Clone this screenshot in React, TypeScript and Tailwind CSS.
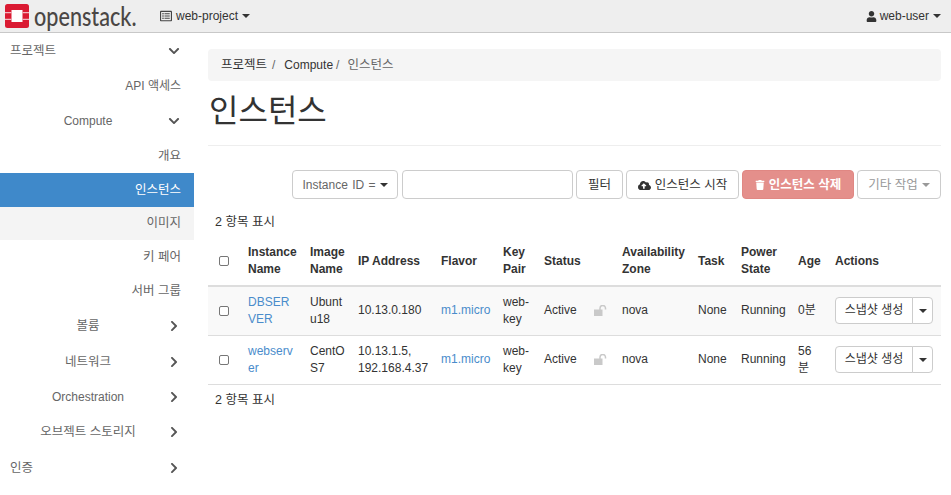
import React from "react";
import {
  FaChevronDown,
  FaChevronRight,
  FaCloudUploadAlt,
  FaRegListAlt,
  FaTrash,
  FaUser,
} from "react-icons/fa";

const Caret = ({ className = "" }: { className?: string }) => (
  <span
    className={`inline-block w-0 h-0 border-x-[4px] border-x-transparent border-t-[4px] border-t-current ${className}`}
  />
);

const Logo = () => (
  <svg width="24" height="24" viewBox="0 0 24 24" className="shrink-0">
    <rect width="24" height="24" rx="2.500" fill="#da1a32" />
    <rect x="6.500" y="6" width="11" height="12" fill="#fff" />
    <path fill="#f3b6bf" d="M0 8h6.500v1.200H0zM0 14.800h6.500V16H0zM17.500 8H24v1.200h-6.500zM17.500 14.800H24V16h-6.500z" />
  </svg>
);

// open padlock, the shackle swings out to the right of the body
const OpenLock = () => (
  <svg width="13" height="11" viewBox="0 0 13 11" className="ml-[6px]">
    <rect x="0" y="4.500" width="8.500" height="6.500" fill="#c9c9c9" />
    <path
      d="M6 5V3.200a2.500 2.500 0 0 1 5.500 0V4.500"
      fill="none"
      stroke="#c9c9c9"
      strokeWidth="1.500"
    />
  </svg>
);

type NavItem = {
  label: string;
  level: "top" | "group" | "leaf";
  h: string;
  open?: boolean;
  active?: boolean;
  hover?: boolean;
};

const navItems: NavItem[] = [
  { label: "프로젝트", level: "top", open: true, h: "h-[36px]" },
  { label: "API 액세스", level: "leaf", h: "h-[34px]" },
  { label: "Compute", level: "group", open: true, h: "h-[36px]" },
  { label: "개요", level: "leaf", h: "h-[34px]" },
  { label: "인스턴스", level: "leaf", active: true, h: "h-[34px]" },
  { label: "이미지", level: "leaf", hover: true, h: "h-[33px]" },
  { label: "키 페어", level: "leaf", h: "h-[34px]" },
  { label: "서버 그룹", level: "leaf", h: "h-[34px]" },
  { label: "볼륨", level: "group", h: "h-[36px]" },
  { label: "네트워크", level: "group", h: "h-[36px]" },
  { label: "Orchestration", level: "group", h: "h-[34px]" },
  { label: "오브젝트 스토리지", level: "group", h: "h-[36px]" },
  { label: "인증", level: "top", h: "h-[36px]" },
];

const labelSize = (label: string) =>
  /^[가-힣 ]+$/.test(label) ? "text-[12.5px]" : "text-[12px]";

const Sidebar = () => (
  <nav className="w-[194px] shrink-0">
    {navItems.map((item) => (
      <div
        key={item.label}
        className={`flex ${item.h} items-center pl-[10px] pr-[13px] ${
          item.active
            ? "bg-[#3f89ca] text-white"
            : item.hover
            ? "bg-[#f4f4f4] text-[#666]"
            : "text-[#666]"
        }`}
      >
        {item.level === "leaf" ? (
          <span className={`w-full text-right ${labelSize(item.label)}`}>
            {item.label}
          </span>
        ) : (
          <>
            <span
              className={`flex-1 pr-[1px] ${labelSize(item.label)} ${
                item.level === "top" ? "text-left" : "text-center"
              }`}
            >
              {item.label}
            </span>
            <span className="w-[13px] mr-[1px] flex justify-center text-[#555]">
              {item.open ? (
                <FaChevronDown size={12} />
              ) : (
                <FaChevronRight size={12} />
              )}
            </span>
          </>
        )}
      </div>
    ))}
  </nav>
);

const Btn = ({
  children,
  className = "",
}: {
  children: React.ReactNode;
  className?: string;
}) => (
  <button
    className={`h-[29px] pt-[1px] flex items-center justify-center gap-1 rounded-[4px] border border-[#ccc] bg-white text-[#333] ${className}`}
  >
    {children}
  </button>
);

const Checkbox = () => (
  <span className="block w-[10px] h-[10px] mx-auto rounded-[2px] border border-[#767676] bg-white" />
);

const rows = [
  {
    name: "DBSERVER",
    image: "Ubuntu18",
    ip: ["10.13.0.180"],
    age: "0분",
    bg: "bg-[#f9f9f9]",
  },
  {
    name: "webserver",
    image: "CentOS7",
    ip: ["10.13.1.5,", "192.168.4.37"],
    age: "56분",
    bg: "",
  },
];

const headers = [
  "Instance Name",
  "Image Name",
  "IP Address",
  "Flavor",
  "Key Pair",
  "Status",
  "",
  "Availability Zone",
  "Task",
  "Power State",
  "Age",
  "Actions",
];

const widths = [32, 62, 48, 83, 62, 41, 44, 34, 76, 43, 57, 37, 114];

export default function App() {
  return (
    <div className="w-[951px] h-[495px] overflow-hidden bg-white text-[12px] leading-[17px] text-[#333] font-['Liberation_Sans','Noto_Sans_CJK_KR',sans-serif]">
      <header className="h-[33px] flex items-center bg-[#eeeeee] border-b border-[#c8c8c8] pr-[10px]">
        <div className="flex items-center pl-[5px]">
          <Logo />
          <span className="ml-[5px] w-[104px] text-[27px] leading-[32px] font-medium whitespace-nowrap origin-left scale-x-[0.8] text-[#4a4644] font-['Lato',sans-serif]">
            openstack.
          </span>
        </div>
        <div className="ml-[22px] flex items-center gap-[4px]">
          <FaRegListAlt size={12} className="text-[#444]" />
          <span>web-project</span>
          <Caret />
        </div>
        <div className="ml-auto flex items-center gap-[4px]">
          <FaUser size={11} className="text-[#333] -mr-[1px]" />
          <span>web-user</span>
          <Caret />
        </div>
      </header>

      <div className="flex">
        <Sidebar />
        <main className="ml-[14px] w-[733px] pt-[16px]">
          <div className="h-[32px] flex items-center rounded-[4px] bg-[#f5f5f5] px-[13px]">
            <span className="text-[12.5px]">프로젝트</span>
            <span className="ml-[5px] mr-[9px] text-[#666]">/</span>
            <span>Compute</span>
            <span className="ml-[3px] mr-[8px] text-[#666]">/</span>
            <span className="text-[12.5px] text-[#666]">인스턴스</span>
          </div>
          <h1 className="mt-[11px] h-[53px] text-[32px] leading-[38px] pl-[1px] font-normal">
            인스턴스
          </h1>
          <div className="border-b border-[#eeeeee]" />
          <div className="mt-[24px] flex items-center justify-end gap-[3px]">
            <Btn className="w-[106px] !text-[#666] [word-spacing:1px]">
              Instance ID = <Caret className="text-[#333]" />
            </Btn>
            <div className="ml-[1px] w-[171px] h-[29px] rounded-[4px] border border-[#ccc] bg-white" />
            <Btn className="w-[47px] text-[12.5px]">필터</Btn>
            <Btn className="w-[113px] text-[12.5px]">
              <FaCloudUploadAlt size={13} />
              인스턴스 시작
            </Btn>
            <Btn className="w-[112px] !bg-[#e48f8b] !border-[#e08783] !text-white font-bold text-[12.5px]">
              <FaTrash size={10} />
              인스턴스 삭제
            </Btn>
            <Btn className="w-[84px] !text-[#999] text-[12.5px]">
              기타 작업 <Caret />
            </Btn>
          </div>

          <div className="mt-[15px] pl-[7px] h-[17px] text-[12.5px]">
            2 항목 표시
          </div>

          <table className="mt-[6px] w-[733px] table-fixed border-collapse">
            <colgroup>
              {widths.map((w, i) => (
                <col key={i} style={{ width: w }} />
              ))}
            </colgroup>
            <thead>
              <tr className="h-[49px] border-b-2 border-[#dddddd]">
                <th className="px-[8px]">
                  <Checkbox />
                </th>
                {headers.map((h, i) => (
                  <th key={i} className="px-[8px] text-left font-bold">
                    {h}
                  </th>
                ))}
              </tr>
            </thead>
            <tbody>
              {rows.map((r) => (
                <tr
                  key={r.name}
                  className={`h-[49px] border-b border-[#dddddd] ${r.bg}`}
                >
                  <td className="px-[8px]">
                    <Checkbox />
                  </td>
                  <td className="px-[8px] break-all text-[#4a8ccb]">{r.name}</td>
                  <td className="pl-[8px] pr-[4px] break-all">{r.image}</td>
                  <td className="px-[8px]">
                    {r.ip.map((ip) => (
                      <div key={ip}>{ip}</div>
                    ))}
                  </td>
                  <td className="px-[8px] text-[#4a8ccb]">m1.micro</td>
                  <td className="px-[8px]">web-key</td>
                  <td className="px-[8px]">Active</td>
                  <td className="px-[8px]">
                    <OpenLock />
                  </td>
                  <td className="px-[8px]">nova</td>
                  <td className="px-[8px]">None</td>
                  <td className="px-[8px]">Running</td>
                  <td className="px-[8px] break-all">{r.age}</td>
                  <td className="pl-[8px] pr-[8px]">
                    <div className="flex">
                      <span className="w-[78px] h-[27px] flex items-center justify-center rounded-l-[4px] border border-[#ccc] bg-white">
                        스냅샷 생성
                      </span>
                      <span className="w-[21px] h-[27px] -ml-px flex items-center justify-center rounded-r-[4px] border border-[#ccc] bg-white">
                        <Caret />
                      </span>
                    </div>
                  </td>
                </tr>
              ))}
            </tbody>
          </table>

          <div className="mt-[7px] pl-[7px] text-[12.5px]">2 항목 표시</div>
        </main>
      </div>
    </div>
  );
}
